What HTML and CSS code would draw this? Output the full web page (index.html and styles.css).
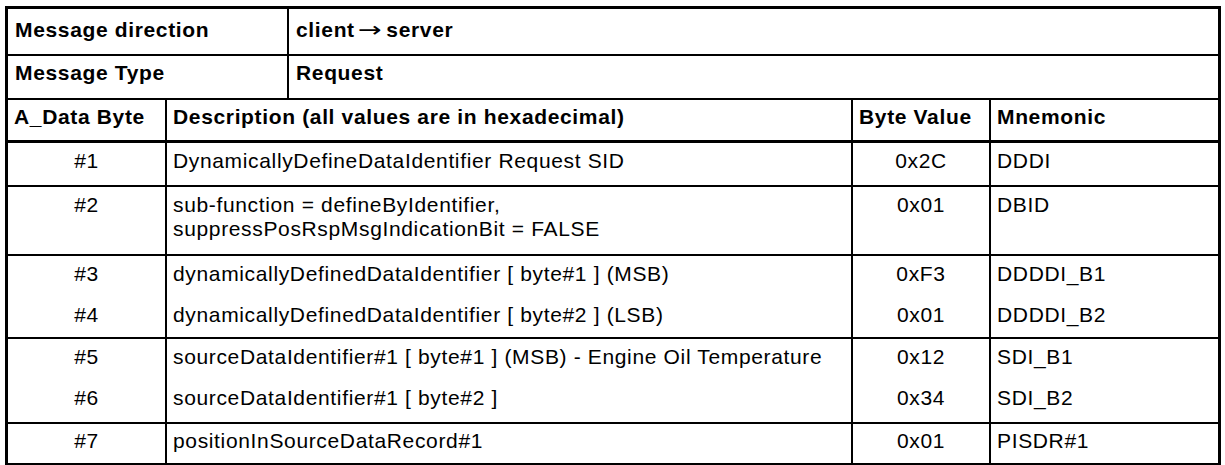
FILE: index.html
```html
<!DOCTYPE html>
<html lang="en">
<head>
<meta charset="utf-8">
<title>DynamicallyDefineDataIdentifier request</title>
<link rel="stylesheet" href="styles.css">
</head>
<body>
<div class="spec">
  <div class="meta m1">
    <div class="cell lab">Message direction</div>
    <div class="cell val">client<span class="arw">&rarr;</span>server</div>
  </div>
  <div class="meta m2">
    <div class="cell lab">Message Type</div>
    <div class="cell val">Request</div>
  </div>
  <div class="grid head">
    <div class="cell">A_Data Byte</div>
    <div class="cell">Description (all values are in hexadecimal)</div>
    <div class="cell">Byte Value</div>
    <div class="cell last">Mnemonic</div>
  </div>
  <div class="grid grp g1">
    <div class="cell ctr">#1</div>
    <div class="cell">DynamicallyDefineDataIdentifier Request SID</div>
    <div class="cell ctr">0x2C</div>
    <div class="cell last">DDDI</div>
  </div>
  <div class="grid grp g2">
    <div class="cell ctr">#2</div>
    <div class="cell">sub-function = defineByIdentifier,<br>suppressPosRspMsgIndicationBit = FALSE</div>
    <div class="cell ctr">0x01</div>
    <div class="cell last">DBID</div>
  </div>
  <div class="grid grp g3">
    <div class="cell ctr">#3</div>
    <div class="cell">dynamicallyDefinedDataIdentifier [ byte#1 ] (MSB)</div>
    <div class="cell ctr">0xF3</div>
    <div class="cell last">DDDDI_B1</div>
    <div class="cell ctr">#4</div>
    <div class="cell">dynamicallyDefinedDataIdentifier [ byte#2 ] (LSB)</div>
    <div class="cell ctr">0x01</div>
    <div class="cell last">DDDDI_B2</div>
  </div>
  <div class="grid grp g4">
    <div class="cell ctr">#5</div>
    <div class="cell">sourceDataIdentifier#1 [ byte#1 ] (MSB) - Engine Oil Temperature</div>
    <div class="cell ctr">0x12</div>
    <div class="cell last">SDI_B1</div>
    <div class="cell ctr">#6</div>
    <div class="cell">sourceDataIdentifier#1 [ byte#2 ]</div>
    <div class="cell ctr">0x34</div>
    <div class="cell last">SDI_B2</div>
  </div>
  <div class="grid grp g5 end">
    <div class="cell ctr">#7</div>
    <div class="cell">positionInSourceDataRecord#1</div>
    <div class="cell ctr">0x01</div>
    <div class="cell last">PISDR#1</div>
  </div>
</div>
</body>
</html>
```

FILE: styles.css
```css
html, body {
  margin: 0;
  padding: 0;
  background: #fff;
}

body {
  font-family: "Liberation Sans", Arial, sans-serif;
  font-size: 21px;
  letter-spacing: 0.65px;
  line-height: 24px;
  color: #000;
}

.spec {
  box-sizing: border-box;
  width: 1216px;
  margin: 6px 0 0 5px;
  border: 3px solid #000;
}

.cell {
  box-sizing: border-box;
  padding: 6px 6px 0 6px;
  white-space: nowrap;
}

/* top two "Message ..." rows */
.meta {
  display: grid;
  grid-template-columns: 281px 1fr;
  border-bottom: 2px solid #000;
  font-weight: bold;
}

.meta .cell {
  padding-left: 7px;
}

.meta .lab {
  border-right: 2px solid #000;
}

.m1 {
  height: 45px;
}

.m1 .cell {
  padding-top: 9px;
}

.m2 {
  height: 42px;
}

.m2 .cell {
  padding-top: 5px;
}

.arw {
  display: inline-block;
  font-family: "DejaVu Sans", sans-serif;
  font-weight: normal;
  letter-spacing: 0;
  margin: 0 8px 0 6px;
  transform: scaleX(1.35);
}

/* four-column part */
.grid {
  display: grid;
  grid-template-columns: 159px 686px 138px 1fr;
}

.grid .cell {
  border-right: 2px solid #000;
}

.grid .cell.last {
  border-right: 0;
}

.head {
  font-weight: bold;
  grid-template-rows: 40px;
  border-bottom: 3px solid #000;
}

.head .cell {
  padding-top: 5px;
}

.grp {
  border-bottom: 2px solid #000;
}

.grp.end {
  border-bottom: 0;
}

.ctr {
  text-align: center;
}

.g1 { grid-template-rows: 42px; }
.g2 { grid-template-rows: 67px; }
.g3 { grid-template-rows: 41px 40px; }
.g4 { grid-template-rows: 41px 42px; }
.g5 { grid-template-rows: 39px; }

.g5 .cell {
  padding-top: 5px;
}
```
